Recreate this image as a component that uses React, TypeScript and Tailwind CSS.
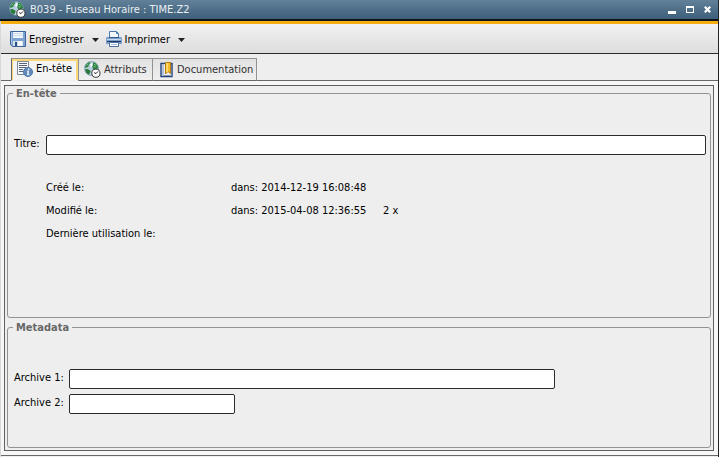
import { useState } from "react";
import type { ReactNode } from "react";

function GlobeClockIcon() {
  return (
    <svg viewBox="0 0 17 17" className="w-[17px] h-[17px] shrink-0" aria-hidden="true">
      <circle cx="7.5" cy="7.5" r="7" fill="#b7cfdf" stroke="#5a86a4" strokeWidth="0.6" />
      <path d="M1 5.6 2 3.6 4.2 1.6 6 1.2l.4 1-1.6 1.6-.2 1.6-1.6 1-1.8.4Z" fill="#2f8540" />
      <path d="M1 8.2 3.6 8l2.6 1.4.4 1.4-1.4 2.4-.6.6L2 11.6Z" fill="#2a7a3a" />
      <path d="M9.2 1.2 11.8 2.2 13.8 5l.4 2.6-1.8.2-1.6 1-1.8-1-.8-2 .8-2Z" fill="#2c8540" />
      <path d="m6.8 2.6 1.4-.4.2 2-1 1.8-1.2-1Z" fill="#fff" />
      <path d="M2.6 4.4 4.2 2.8M10 3.2l1.8 1.2M9.6 5.6l2 .4" stroke="#8cc795" strokeWidth="0.9" />
      <circle cx="11.9" cy="12.2" r="4.1" fill="#fff" stroke="#303438" strokeWidth="1" />
      <path d="M14 10.4 12 12.6l-1.8-1" fill="none" stroke="#202428" strokeWidth="1" />
    </svg>
  );
}

function SaveIcon() {
  return (
    <svg viewBox="0 0 16 16" className="w-4 h-4 shrink-0" aria-hidden="true">
      <path d="M.5.5h15v15h-13l-2-2Z" fill="#7ca4d3" stroke="#3f659c" />
      <path d="M1 1h1v12H1z" fill="#a9c6e8" />
      <path d="M3 1h10v6H3z" fill="#f1f6fb" />
      <path d="M3 2h10v1H3zM3 4h10v1H3z" fill="#ccdcec" />
      <path d="M3 10h10v5H3z" fill="#d4dfe9" />
      <path d="M5 11h2v4H5z" fill="#294d85" />
      <path d="M8 10h4v5H8z" fill="#f8fafc" />
    </svg>
  );
}

function PrinterIcon() {
  return (
    <svg viewBox="0 0 16 16" className="w-4 h-4 shrink-0" aria-hidden="true">
      <path d="M3.5.5h7l2 2v4h-9z" fill="#f4f8fd" stroke="#4b79af" />
      <path d="M10.5.5v2h2" fill="none" stroke="#4b79af" />
      <path d="M1 6h14l1 1v6H0V7Z" fill="#7d9fca" />
      <path d="M3 6h10v1H3z" fill="#35588c" />
      <path d="M1 8h14v1H1z" fill="#c5d9ef" />
      <path d="M1 10h14v1H1z" fill="#1f3c68" />
      <path d="M3.5 11.5h9v4h-9z" fill="#fff" stroke="#4b6f9f" />
      <path d="M5 13h6v1H5z" fill="#a7bfd9" />
    </svg>
  );
}

function HeaderIcon() {
  return (
    <svg viewBox="0 0 16 16" className="w-4 h-4 shrink-0" aria-hidden="true">
      <path d="M.5.5h11v13H.5z" fill="#f7f9fc" stroke="#7b8899" />
      <path d="M2 2.5h8M2 4.5h8M2 6.5h7M2 8.5h4M2 10.5h4" stroke="#56657c" />
      <circle cx="11" cy="11" r="4.5" fill="#638abd" stroke="#4b73a8" />
      <path d="M11 7.6h1.4V9H11zM9.8 9.8H12l-.4 3.6h1v.8H10l.5-3.6h-.7z" fill="#f2f7fd" />
    </svg>
  );
}

function BookIcon() {
  return (
    <svg viewBox="0 0 14 16" className="w-3.5 h-4 shrink-0" aria-hidden="true">
      <path d="M1 1.5h11v13H1z" fill="#e8edf5" stroke="#23427c" strokeWidth="1.4" />
      <path d="M2 3h2v10H2z" fill="#b3c0d8" />
      <path d="M4 13.5h8" stroke="#8b98ac" />
      <path d="M5.5.5h5v11L8 9.5l-2.5 2.5Z" fill="#f4bd27" stroke="#b87c0a" />
      <path d="M6.5 1h1.3v8.5l-1.3 1z" fill="#ffe486" />
    </svg>
  );
}

function ToolButton({ icon, label }: { icon: ReactNode; label: string }) {
  return (
    <div className="flex items-center gap-1">
      <button type="button" className="flex items-center gap-[3px] text-black">
        {icon}
        <span className="pt-0.5">{label}</span>
      </button>
      <button type="button" aria-label={`${label} : options`} className="flex h-4 w-4 items-center justify-center pt-0.5">
        <svg viewBox="0 0 7 4" className="h-1 w-[7px]" aria-hidden="true">
          <path d="M0 0h7L3.5 4Z" fill="#222" />
        </svg>
      </button>
    </div>
  );
}

const TABS = [
  { id: "header",     label: "En-tête",       icon: <HeaderIcon />,     className: "w-[68px] pl-[5px] gap-[3px]" },
  { id: "attributes", label: "Attributs",     icon: <GlobeClockIcon />, className: "w-[75px] pl-[5px] gap-[3px]" },
  { id: "docs",       label: "Documentation", icon: <BookIcon />,       className: "w-[105px] pl-[7px] gap-[3px]" },
];

const TEXT_INPUT = "h-5 min-w-0 rounded-xs border border-[#2b2b2b] bg-white px-1 outline-none";
const FIELDSET = "min-w-0 rounded-[3px] border border-[#929292] pl-[5px] pr-1";
const LEGEND = "px-[3px] font-bold leading-[13px] text-[#686868]";

export default function App() {
  const [active, setActive] = useState("header");

  return (
    <div className="flex min-h-screen flex-col border-r border-[#202428] bg-[#eeeeee] font-['DejaVu_Sans_Condensed','DejaVu_Sans',sans-serif] text-[11px] leading-[14px] text-black">
      {/* Title bar */}
      <header className="flex h-[21px] items-center border-b-2 border-[#101418] bg-linear-to-b from-[#628099] to-[#3d5f7a] pl-[9px] pr-[7px] text-[#e8eef2]">
        <GlobeClockIcon />
        <h1 className="ml-1 flex-1 pt-px">B039 - Fuseau Horaire : TIME.Z2</h1>
        <div className="flex items-center gap-2.5">
          <button type="button" aria-label="Réduire" className="flex h-2 w-2 items-end">
            <span className="h-[3px] w-2 bg-white" />
          </button>
          <button type="button" aria-label="Agrandir" className="h-[7px] w-2 border border-t-2 border-white" />
          <button type="button" aria-label="Fermer" className="h-[7px] w-[7px]">
            <svg viewBox="0 0 7 7" className="h-[7px] w-[7px]" aria-hidden="true">
              <path d="m.8.8 5.4 5.4M6.2.8.8 6.2" stroke="#fff" strokeWidth="2.2" />
            </svg>
          </button>
        </div>
      </header>

      <div className="flex flex-1 flex-col border-l border-[#d8d8d8]">
        {/* Toolbar */}
        <div className="flex h-[33px] items-center border-b border-t-3 border-b-[#2b2b2b] border-t-[#f3ad0e] bg-linear-to-b from-[#f2f2f2] to-[#dddddd] pl-[9px]">
          <ToolButton icon={<SaveIcon />} label="Enregistrer" />
          <div className="ml-0.5">
            <ToolButton icon={<PrinterIcon />} label="Imprimer" />
          </div>
        </div>

        {/* Tabs */}
        <div className="border-b border-[#686868] pl-2.5 pt-1">
          <div role="tablist" className="-mb-px flex">
            {TABS.map((tab) => (
              <button
                key={tab.id}
                type="button"
                role="tab"
                aria-selected={active === tab.id}
                onClick={() => setActive(tab.id)}
                className={`flex h-[23px] items-center whitespace-nowrap border ${tab.className} ${
                  active === tab.id
                    ? "border-b-[#eeeeee] border-l-[#686868] border-r-[#929292] border-t-[#929292] bg-[#f4f4f4] pb-0.5 text-black shadow-[inset_1px_2px_0_#fbd77c,inset_-2px_0_0_#fbd77c]"
                    : "-ml-px border-[#929292] border-b-[#686868] bg-linear-to-b from-[#e2e2e2] to-[#efefef] text-[#303030] first:ml-0"
                }`}
              >
                {tab.icon}
                {tab.label}
              </button>
            ))}
          </div>
        </div>

        {/* Tab content */}
        <main className="flex flex-1 flex-col border-b border-[#686868] bg-[#f6f6f6] pb-1 pl-[3px] pr-1 pt-1 mb-px">
          <div className="flex flex-1 flex-col gap-[3px] border border-[#606060] bg-[#eeeeee] px-0.5 pb-0.5 pt-px">
            <fieldset className={`${FIELDSET} flex-1`}>
              <legend className={LEGEND}>En-tête</legend>
              <div className="flex pl-px pt-[35px]">
                <label htmlFor="titre" className="w-8 whitespace-nowrap pt-0.5">Titre:</label>
                <input id="titre" type="text" className={`${TEXT_INPUT} flex-1`} />
              </div>
              <dl className="grid grid-cols-[185px_152px_1fr] pl-[33px] pt-[21px] leading-[23px]">
                <dt>Créé le:</dt>
                <dd className="col-span-2">dans: 2014-12-19 16:08:48</dd>
                <dt>Modifié le:</dt>
                <dd>dans: 2015-04-08 12:36:55</dd>
                <dd>2 x</dd>
                <dt>Dernière utilisation le:</dt>
              </dl>
            </fieldset>

            <fieldset className={`${FIELDSET} pb-[33px]`}>
              <legend className={LEGEND}>Metadata</legend>
              <div className="flex flex-col gap-[5px] pl-px pt-[35px]">
                <div className="flex">
                  <label htmlFor="archive1" className="w-[55px] whitespace-nowrap pt-0.5">Archive 1:</label>
                  <input id="archive1" type="text" className={`${TEXT_INPUT} w-[486px]`} />
                </div>
                <div className="flex">
                  <label htmlFor="archive2" className="w-[55px] whitespace-nowrap pt-0.5">Archive 2:</label>
                  <input id="archive2" type="text" className={`${TEXT_INPUT} w-[166px]`} />
                </div>
              </div>
            </fieldset>
          </div>
        </main>
      </div>
    </div>
  );
}
